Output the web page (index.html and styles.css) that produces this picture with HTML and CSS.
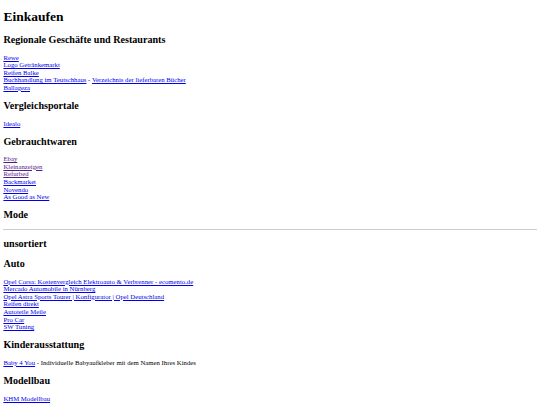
FILE: index.html
```html
<!DOCTYPE html>
<html lang="de">

<head>
  <meta charset="UTF-8">
  <meta name="viewport" content="width=device-width, initial-scale=1.0">
  <title>Einkaufen</title>
  <link rel="stylesheet" href="styles.css">
</head>

<body>
  <h1>Einkaufen</h1>

  <h2>Regionale Geschäfte und Restaurants</h2>
  <p>
    <a href="#">Rewe</a><br>
    <a href="#">Logo Getränkemarkt</a><br>
    <a href="#">Reifen Balke</a><br>
    <a href="#">Buchhandlung im Teutschhaus</a> - <a href="#">Verzeichnis der lieferbaren Bücher</a><br>
    <a href="#">Ballageza</a>
  </p>

  <h2>Vergleichsportale</h2>
  <p>
    <a href="#">Idealo</a>
  </p>

  <h2>Gebrauchtwaren</h2>
  <p>
    <a href="#" class="visited">Ebay</a><br>
    <a href="#" class="visited">Kleinanzeigen</a><br>
    <a href="#" class="visited">Refurbed</a><br>
    <a href="#">Backmarket</a><br>
    <a href="#">Novendo</a><br>
    <a href="#">As Good as New</a>
  </p>

  <h2>Mode</h2>
  <hr>

  <h2>unsortiert</h2>

  <h2>Auto</h2>
  <p>
    <a href="#">Opel Corsa: Kostenvergleich Elektroauto &amp; Verbrenner - ecomento.de</a><br>
    <a href="#">Mercado Automobile in Nürnberg</a><br>
    <a href="#">Opel Astra Sports Tourer | Konfigurator | Opel Deutschland</a><br>
    <a href="#">Reifen direkt</a><br>
    <a href="#">Autoteile Meile</a><br>
    <a href="#">Pro Car</a><br>
    <a href="#">SW Tuning</a>
  </p>

  <h2>Kinderausstattung</h2>
  <p>
    <a href="#">Baby 4 You</a> - Individuelle Babyaufkleber mit dem Namen Ihres Kindes
  </p>

  <h2>Modellbau</h2>
  <p>
    <a href="#">KHM Modellbau</a>
  </p>
</body>

</html>
```

FILE: styles.css
```css
body {
  font-family: 'Liberation Serif', 'Times New Roman', serif;
  font-size: 6.75px;
  line-height: 7.6px;
  margin: 3.4px;
  color: #000;
  background-color: #fff;
}

h1 {
  font-size: 2em;
  line-height: 15.4px;
  margin: 6px 0 0.67em;
}

h2 {
  font-size: 1.5em;
  line-height: 11.3px;
  margin: 0.83em 0;
}

p {
  margin: 1em 0;
}

a {
  color: #0000ee;
}

a.visited {
  color: #551a8b;
}

hr {
  border: none;
  border-top: 1px solid #cccccc;
  margin: 3.4px 0;
}
```
